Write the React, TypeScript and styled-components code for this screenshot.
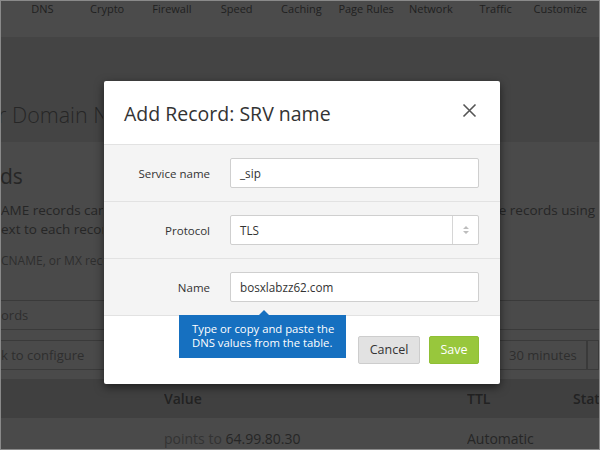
import React from "react";
import styled, { createGlobalStyle } from "styled-components";

const Global = createGlobalStyle`
  html, body { margin: 0; padding: 0; background: #4a4a4a; }
  body { font-family: "Open Sans", "Liberation Sans", sans-serif; }
  * { box-sizing: border-box; }
`;

const Frame = styled.div`
  position: relative;
  width: 600px;
  height: 450px;
  overflow: hidden;
  background: #4a4a4a;
  border: 1px solid #8a8a8a;
  color: #262626;
`;

const Nav = styled.div`
  display: flex;
  height: 36px;
  padding-left: 9px;
  background: #4b4b4b;
`;

const NavItem = styled.div`
  width: 64.75px;
  text-align: center;
  font-size: 11px;
  line-height: 15px;
  color: #1f1f1f;
  white-space: nowrap;
`;

const HeaderBand = styled.div`
  height: 105px;
  background: #444444;
  padding-top: 62px;
`;

const Clip = styled.div<{ $w: number }>`
  width: ${(p) => p.$w}px;
  overflow: hidden;
  white-space: nowrap;
`;

const PageTitle = styled(Clip)`
  font-size: 21.5px;
  font-weight: 300;
  line-height: 32px;
  color: #262626;
  text-indent: -3px;
`;

const Content = styled.div`
  padding-top: 20px;
`;

const SectionTitle = styled.div`
  font-size: 21px;
  line-height: 28px;
  color: #262626;
  margin-left: -1px;
`;

const Para = styled.div`
  margin-top: 11px;
`;

const ParaLine = styled.div`
  display: grid;
  grid-template-columns: 102px 1fr auto;
  font-size: 13.5px;
  line-height: 19px;
  color: #262626;
  white-space: nowrap;
  padding-right: 4px;
`;

const SmallLine = styled(Clip)`
  margin-top: 14px;
  font-size: 12px;
  line-height: 16px;
  color: #2e2e2e;
`;

const SearchRow = styled.div`
  margin-top: 31px;
  height: 30px;
  border-top: 1px solid #3a3a3a;
  border-bottom: 1px solid #3a3a3a;
  font-size: 13px;
  line-height: 28px;
  color: #2e2e2e;
`;

const ConfigRow = styled.div`
  margin-top: 10px;
  height: 30px;
  display: flex;
  align-items: stretch;
`;

const ConfigCell = styled.div<{ $w?: number; $grow?: boolean }>`
  ${(p) => (p.$grow ? "flex: 1;" : `width: ${p.$w}px;`)}
  border: 1px solid #3a3a3a;
  border-left: ${(p) => (p.$grow ? "none" : "1px solid #3a3a3a")};
  font-size: 13px;
  line-height: 28px;
  color: #2e2e2e;
  padding-left: ${(p) => (p.$grow ? "0" : "10px")};
  white-space: nowrap;
  overflow: hidden;
`;

const TableHead = styled.div`
  margin-top: 9px;
  height: 39px;
  background: #404040;
  display: grid;
  grid-template-columns: 163px 303px 106px 1fr;
  align-items: center;
  font-size: 14px;
  font-weight: 600;
  color: #222;
`;

const TableRow = styled.div`
  height: 33px;
  display: grid;
  grid-template-columns: 163px 303px 106px 1fr;
  align-items: center;
  font-size: 14px;
  color: #262626;
  padding-top: 8px;
`;

const Cell = styled.span`
  white-space: nowrap;
  overflow: hidden;
`;

const Muted = styled.span`
  color: #333;
`;

const Modal = styled.div`
  position: absolute;
  left: 103px;
  top: 80px;
  width: 396px;
  height: 303px;
  background: #fff;
  border-radius: 2px;
  box-shadow: 0 3px 10px rgba(0, 0, 0, 0.55);
  display: flex;
  flex-direction: column;
`;

const ModalHeader = styled.div`
  height: 64px;
  border-bottom: 1px solid #e2e2e2;
  display: flex;
  align-items: center;
  justify-content: space-between;
  padding: 0 23px 0 20px;
`;

const ModalTitle = styled.div`
  font-size: 19.5px;
  color: #333;
  padding-top: 2px;
`;

const CloseBtn = styled.div`
  width: 15px;
  height: 15px;
  display: flex;
  margin-top: -4px;
`;

const Body = styled.div`
  background: #f4f4f4;
`;

const FormRow = styled.div`
  height: 57px;
  border-bottom: 1px solid #e2e2e2;
  display: grid;
  grid-template-columns: 106px 1fr;
  column-gap: 20px;
  align-items: center;
  padding-right: 21px;
`;

const Label = styled.div`
  text-align: right;
  font-size: 11.5px;
  color: #333;
`;

const Input = styled.div`
  height: 30px;
  background: #fff;
  border: 1px solid #cfcfcf;
  border-radius: 2px;
  font-size: 11.7px;
  line-height: 28px;
  padding-left: 9px;
  color: #333;
`;

const Select = styled.div`
  height: 30px;
  background: #fff;
  border: 1px solid #cfcfcf;
  border-radius: 2px;
  display: flex;
  font-size: 11.7px;
  line-height: 28px;
  color: #333;
`;

const SelectValue = styled.div`
  flex: 1;
  padding-left: 9px;
`;

const SelectArrow = styled.div`
  width: 26px;
  border-left: 1px solid #d6d6d6;
  display: flex;
  align-items: center;
  justify-content: center;
`;

const Footer = styled.div`
  flex: 1;
  display: flex;
  justify-content: flex-end;
  align-items: flex-start;
  gap: 9px;
  padding: 20px 21px 0 0;
`;

const Button = styled.div<{ $primary?: boolean }>`
  height: 28px;
  width: ${(p) => (p.$primary ? "50px" : "62px")};
  border-radius: 2px;
  font-size: 12.5px;
  line-height: 26px;
  text-align: center;
  background: ${(p) => (p.$primary ? "#98c73c" : "#e2e2e2")};
  border: 1px solid ${(p) => (p.$primary ? "#8fbf35" : "#cdcdcd")};
  color: ${(p) => (p.$primary ? "#fff" : "#333")};
`;

const Tooltip = styled.div`
  position: absolute;
  left: 75px;
  top: 234px;
  width: 167px;
  height: 43px;
  background: #1670c0;
  color: #fff;
  font-size: 11.3px;
  line-height: 14px;
  padding: 7px 0 0 13px;
  white-space: nowrap;
  &::before {
    content: "";
    position: absolute;
    left: 80px;
    top: -5px;
    border-left: 5px solid transparent;
    border-right: 5px solid transparent;
    border-bottom: 5px solid #1670c0;
  }
`;

const navItems = ["DNS", "Crypto", "Firewall", "Speed", "Caching", "Page Rules", "Network", "Traffic", "Customize"];

export default function App() {
  return (
    <>
      <Global />
      <Frame>
        <Nav>
          {navItems.map((n) => (
            <NavItem key={n}>{n}</NavItem>
          ))}
        </Nav>
        <HeaderBand>
          <PageTitle $w={102}>r Domain Names</PageTitle>
        </HeaderBand>
        <Content>
          <SectionTitle>ds</SectionTitle>
          <Para>
            <ParaLine>
              <Clip $w={102}>AME records can be managed</Clip>
              <span />
              <span>re records using</span>
            </ParaLine>
            <ParaLine>
              <Clip $w={102}>ext to each record to edit</Clip>
              <span />
              <span />
            </ParaLine>
          </Para>
          <SmallLine $w={102}>CNAME, or MX records</SmallLine>
          <SearchRow>
            <Clip $w={102}>ords</Clip>
          </SearchRow>
          <ConfigRow>
            <ConfigCell $grow>k to configure</ConfigCell>
            <ConfigCell $w={89}>30 minutes</ConfigCell>
            <ConfigCell $w={12} />
          </ConfigRow>
          <TableHead>
            <span />
            <Cell>Value</Cell>
            <Cell>TTL</Cell>
            <Cell>Statu</Cell>
          </TableHead>
          <TableRow>
            <span />
            <Cell>
              <Muted>points to</Muted> 64.99.80.30
            </Cell>
            <Cell>Automatic</Cell>
            <span />
          </TableRow>
        </Content>

        <Modal>
          <ModalHeader>
            <ModalTitle>Add Record: SRV name</ModalTitle>
            <CloseBtn>
              <svg width="15" height="15" viewBox="0 0 15 15">
                <path d="M1.5 1.5 L13.5 13.5 M13.5 1.5 L1.5 13.5" stroke="#555" strokeWidth="1.6" fill="none" />
              </svg>
            </CloseBtn>
          </ModalHeader>
          <Body>
            <FormRow>
              <Label>Service name</Label>
              <Input>_sip</Input>
            </FormRow>
            <FormRow>
              <Label>Protocol</Label>
              <Select>
                <SelectValue>TLS</SelectValue>
                <SelectArrow>
                  <svg width="8" height="12" viewBox="0 0 8 12">
                    <path d="M1 5 L4 2 L7 5 Z M1 7 L4 10 L7 7 Z" fill="#bdbdbd" />
                  </svg>
                </SelectArrow>
              </Select>
            </FormRow>
            <FormRow>
              <Label>Name</Label>
              <Input>bosxlabzz62.com</Input>
            </FormRow>
          </Body>
          <Footer>
            <Button>Cancel</Button>
            <Button $primary>Save</Button>
          </Footer>
          <Tooltip>
            Type or copy and paste the
            <br />
            DNS values from the table.
          </Tooltip>
        </Modal>
      </Frame>
    </>
  );
}
